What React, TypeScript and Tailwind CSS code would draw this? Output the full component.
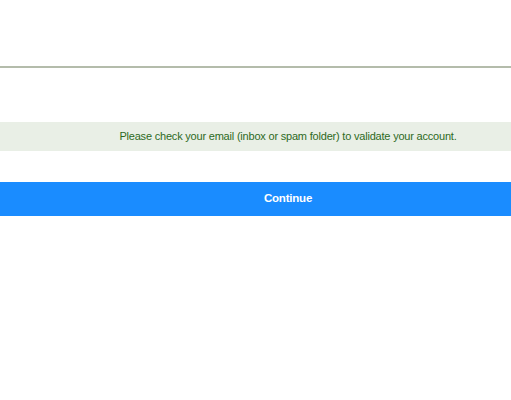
export default function App() {
  return (
    <div className="w-[511px] h-[400px] overflow-hidden bg-white" style={{ fontFamily: '"Liberation Sans", Arial, sans-serif' }}>
      <div className="w-[576px]">
        <div className="h-[66px]" />
        <div className="h-[2px] bg-[#b4bcab]" />
        <div className="h-[54px]" />
        <div className="h-[29px] bg-[#e9efe6] flex items-center justify-center text-[11px] tracking-[-0.2px] text-[#2d6a1e]">
          Please check your email (inbox or spam folder) to validate your account.
        </div>
        <div className="h-[31px]" />
        <button className="w-full h-[34px] bg-[#1a8cff] text-white font-bold text-[11.5px] tracking-[-0.2px] flex items-center justify-center">
          Continue
        </button>
      </div>
    </div>
  );
}
